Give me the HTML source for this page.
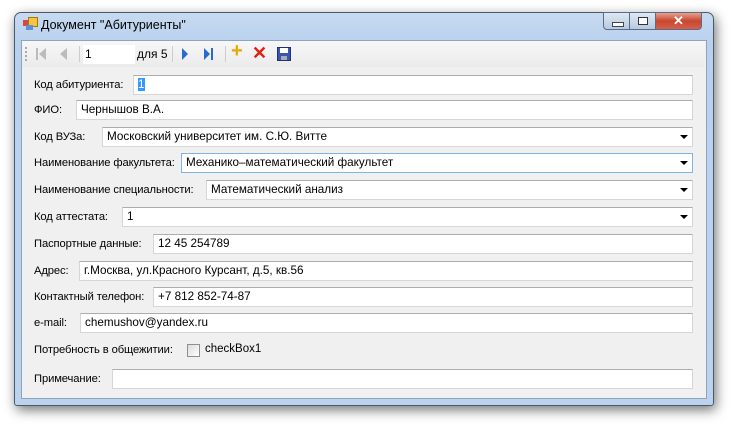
<!DOCTYPE html>
<html><head><meta charset="utf-8"><style>
body{margin:0;width:731px;height:424px;background:#fff;position:relative;overflow:hidden;font-family:"Liberation Sans",sans-serif;font-size:12px;color:#000}
.win{position:absolute;left:14px;top:12px;width:698px;height:392px;border:1px solid #4a5a6e;border-radius:7px 7px 3px 3px;background:linear-gradient(#c7daf0,#b9d1ee 30px,#bcd3ee);box-shadow:2px 4px 12px rgba(0,0,0,.55)}
.client{position:absolute;left:21px;top:40px;width:684px;height:357px;background:#f0f0f0;border:1px solid #8ea3bd}
.title{position:absolute;left:41px;top:18px;font-size:12.5px}
.lbl{position:absolute;left:34px;font-size:11.2px;letter-spacing:-0.1px}
.f{position:absolute;height:20px;background:#fff;border:1px solid #d6d6d6;border-top-color:#abadb3;box-sizing:border-box;padding-left:4px;line-height:18px;white-space:nowrap;font-size:11.7px}
.arr{position:absolute;right:4px;top:7px;width:0;height:0;border-left:4px solid transparent;border-right:4px solid transparent;border-top:4px solid #000}
.btn{position:absolute;top:12px;height:18px;border:1px solid #5a6d87;box-sizing:border-box}
</style></head><body>
<div class="win"></div>
<div class="btn" style="left:603px;width:27px;border-radius:0 0 0 4px;background:linear-gradient(#dfe8f3,#b8c9de)"><div style="position:absolute;left:8px;top:9px;width:10px;height:3px;background:#fff;border:1px solid #445"></div></div>
<div class="btn" style="left:629px;width:27px;background:linear-gradient(#dfe8f3,#b8c9de)"><div style="position:absolute;left:8px;top:4px;width:8px;height:6px;border:1px solid #334;background:#fff"></div></div>
<div class="btn" style="left:655px;width:47px;border-radius:0 0 4px 0;background:linear-gradient(#e8a08f,#c9462f 50%,#d7604a);color:#fff;font-weight:bold;text-align:center;line-height:15px;font-size:13px">✕</div>
<div style="position:absolute;left:23px;top:20px;width:6px;height:6px;background:#d44"></div><div style="position:absolute;left:28px;top:17px;width:8px;height:8px;background:#f4c540;border:1px solid #a70"></div><div style="position:absolute;left:26px;top:25px;width:7px;height:5px;background:#5b8fd6"></div>
<div class="title">Документ "Абитуриенты"</div>
<div class="client"></div>
<div style="position:absolute;left:22px;top:41px;width:683px;height:26px;background:linear-gradient(#f7f7f7,#ebebeb)"></div>
<div style="position:absolute;left:25px;top:47px;width:2px;height:14px;border-left:2px dotted #aaa"></div>
<div style="position:absolute;left:36px;top:48px;width:2px;height:12px;background:#bbb"></div><div style="position:absolute;left:39px;top:48px;border-right:7px solid #bbb;border-top:6px solid transparent;border-bottom:6px solid transparent"></div>
<div style="position:absolute;left:60px;top:48px;border-right:7px solid #bbb;border-top:6px solid transparent;border-bottom:6px solid transparent"></div>
<div style="position:absolute;left:79px;top:46px;width:1px;height:16px;background:#ccc"></div>
<div style="position:absolute;left:83px;top:45px;width:50px;height:19px;background:#fff;line-height:19px;padding-left:2px">1</div>
<div style="position:absolute;left:137px;top:47px">для 5</div>
<div style="position:absolute;left:172px;top:46px;width:1px;height:16px;background:#ccc"></div>
<div style="position:absolute;left:182px;top:48px;border-left:6px solid #2a6ad0;border-top:6px solid transparent;border-bottom:6px solid transparent"></div>
<div style="position:absolute;left:204px;top:48px;border-left:6px solid #2a6ad0;border-top:6px solid transparent;border-bottom:6px solid transparent"></div><div style="position:absolute;left:211px;top:48px;width:2px;height:12px;background:#2a6ad0"></div>
<div style="position:absolute;left:225px;top:46px;width:1px;height:16px;background:#ccc"></div>
<div style="position:absolute;left:231px;top:40px;color:#e8a800;font-size:20px;font-weight:bold">+</div>
<div style="position:absolute;left:252px;top:43px;color:#e02010;font-size:18px;font-weight:bold">✕</div>
<div style="position:absolute;left:277px;top:47px;width:12px;height:12px;background:#3858b0;border:1px solid #203070"><div style="position:absolute;left:2px;top:0;width:8px;height:5px;background:#fff"></div><div style="position:absolute;left:3px;top:8px;width:6px;height:4px;background:#aab"></div></div>

<div class="lbl" style="top:79px">Код абитуриента:</div><div class="f" style="left:133px;top:75px;width:560px"><span style="background:#3399ff;color:#fff">1</span></div>
<div class="lbl" style="top:104px">ФИО:</div><div class="f" style="left:76px;top:100px;width:617px">Чернышов В.А.</div>
<div class="lbl" style="top:131px">Код ВУЗа:</div><div class="f" style="left:102px;top:127px;width:591px">Московский университет им. С.Ю. Витте<div class="arr"></div></div>
<div class="lbl" style="top:157px">Наименование факультета:</div><div class="f" style="left:181px;top:153px;width:512px;border-color:#7eb4ea">Механико–математический факультет<div class="arr"></div></div>
<div class="lbl" style="top:184px">Наименование специальности:</div><div class="f" style="left:206px;top:180px;width:487px">Математический анализ<div class="arr"></div></div>
<div class="lbl" style="top:211px">Код аттестата:</div><div class="f" style="left:122px;top:207px;width:571px">1<div class="arr"></div></div>
<div class="lbl" style="top:238px">Паспортные данные:</div><div class="f" style="left:153px;top:234px;width:540px">12 45 254789</div>
<div class="lbl" style="top:265px">Адрес:</div><div class="f" style="left:79px;top:261px;width:614px">г.Москва, ул.Красного Курсант, д.5, кв.56</div>
<div class="lbl" style="top:291px">Контактный телефон:</div><div class="f" style="left:153px;top:287px;width:540px">+7 812 852-74-87</div>
<div class="lbl" style="top:317px">e-mail:</div><div class="f" style="left:80px;top:313px;width:613px">chemushov@yandex.ru</div>
<div class="lbl" style="top:344px">Потребность в общежитии:</div>
<div style="position:absolute;left:187px;top:344px;width:11px;height:11px;border:1px solid #8f8f8f;background:linear-gradient(135deg,#dcdcdc,#fff)"></div>
<div style="position:absolute;left:205px;top:343px;font-size:11.5px">checkBox1</div>
<div class="lbl" style="top:373px">Примечание:</div><div class="f" style="left:112px;top:369px;width:581px"></div>
</body></html>
